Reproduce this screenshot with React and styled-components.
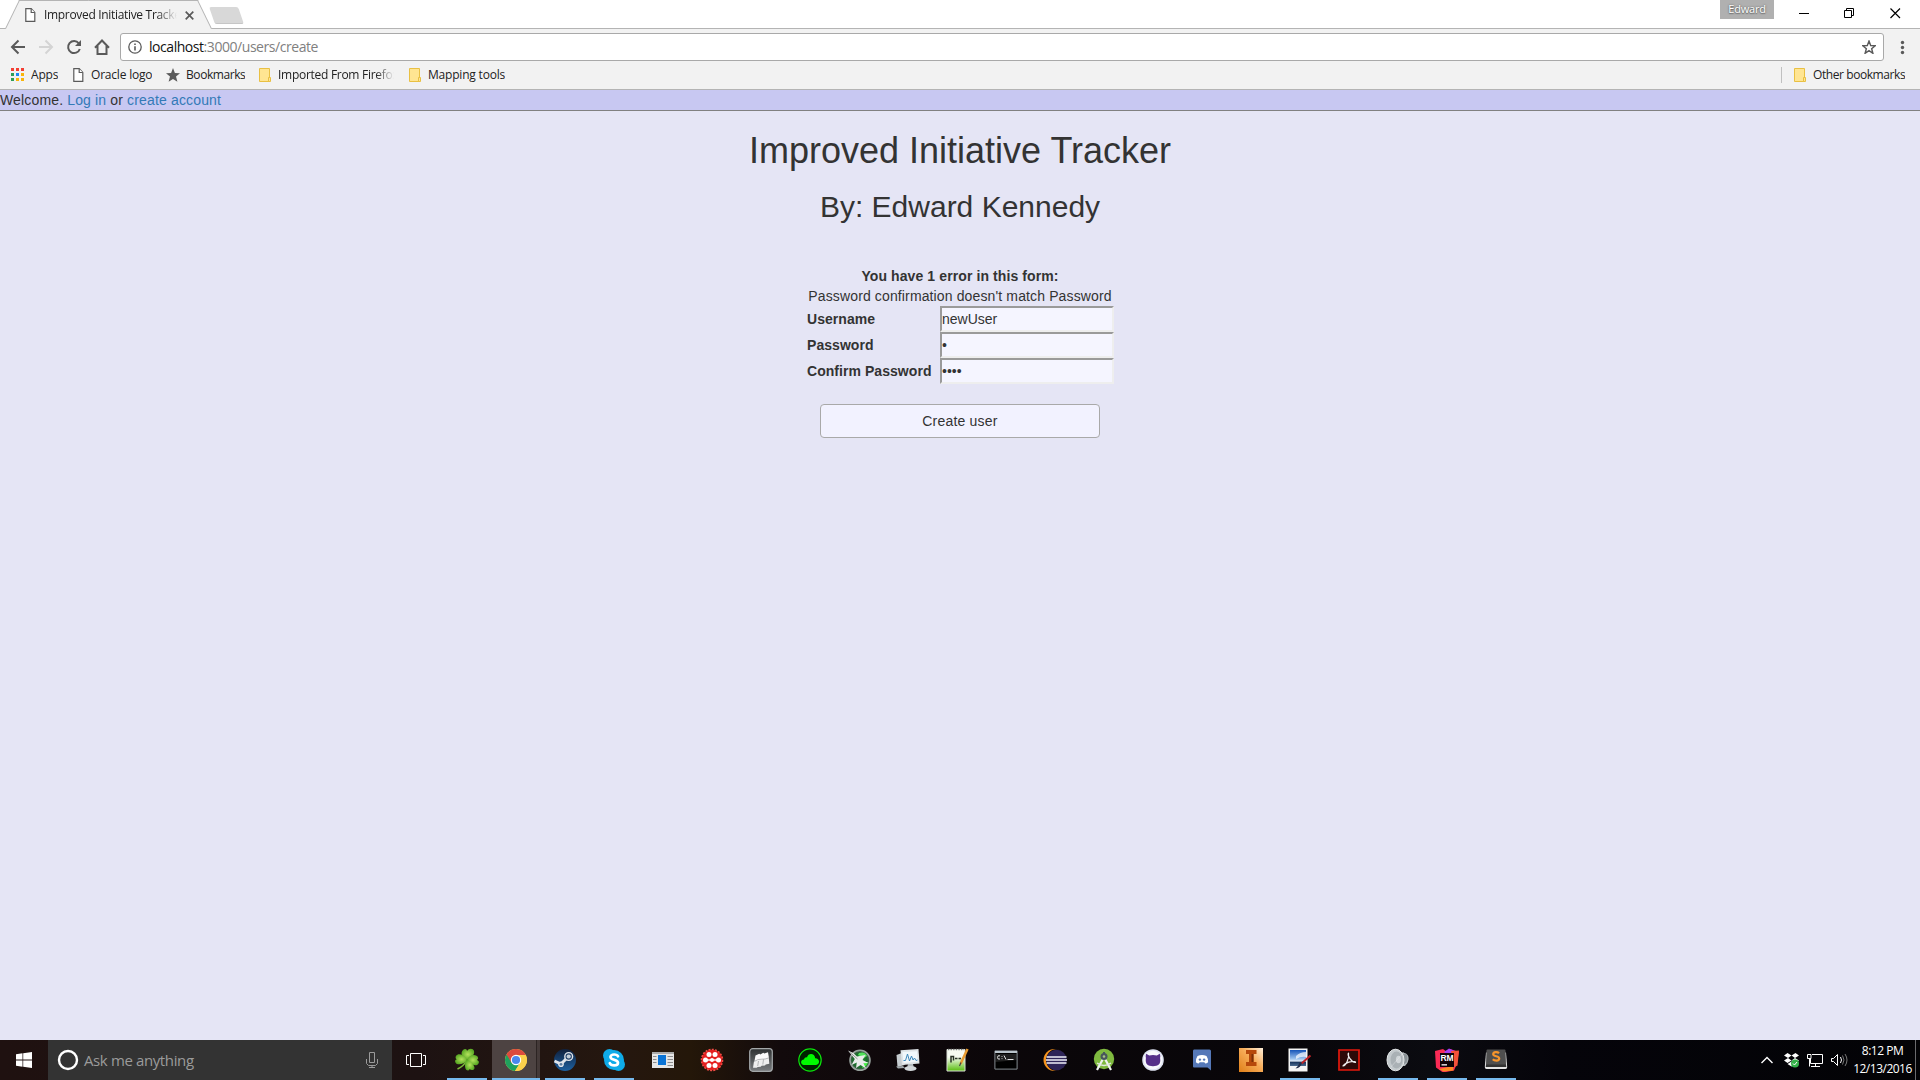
import React from "react";
import styled, { createGlobalStyle } from "styled-components";

const ui = `"Open Sans", "Noto Sans", sans-serif`;
const page = `"Liberation Sans", Arial, Helvetica, sans-serif`;

const Global = createGlobalStyle`
  *, *::before, *::after { box-sizing: border-box; }
  body { margin: 0; overflow: hidden; }
`;

const Screen = styled.div`
  width: 1920px;
  height: 1080px;
  display: flex;
  flex-direction: column;
  background: #e5e5f5;
  overflow: hidden;
`;

/* ---------- browser frame ---------- */
const TabStrip = styled.div`
  height: 29px;
  flex: none;
  display: flex;
  align-items: flex-start;
  background: #fff;
  box-shadow: inset 0 -1px 0 #b4b4b4;
`;

const Tab = styled.div`
  position: relative;
  width: 202px;
  height: 29px;
  margin-left: 7px;
  padding: 1px 0 0 18px;
  display: flex;
  align-items: center;
  &::before,
  &::after {
    content: "";
    position: absolute;
    top: 0;
    bottom: 0;
    background: #f2f2f2;
    border-top: 1px solid #b4b4b4;
  }
  &::before {
    left: 5px;
    width: 100px;
    transform: skewX(-26deg);
    border-left: 1px solid #b4b4b4;
  }
  &::after {
    right: 4px;
    width: 110px;
    transform: skewX(26deg);
    border-right: 1px solid #b4b4b4;
  }
  & > * {
    position: relative;
    z-index: 1;
  }
`;

const TabTitle = styled.span`
  width: 134px;
  margin-left: 8px;
  margin-right: 7px;
  overflow: hidden;
  white-space: nowrap;
  font: 12px/18px ${ui};
  letter-spacing: ${(p) => p.$track || 0}px;
  color: #222;
  mask-image: linear-gradient(90deg, #000 112px, transparent 133px);
`;

const NewTab = styled.div`
  width: 29px;
  height: 17px;
  margin: 7px 0 0 3px;
  background: #d8d8d8;
  border-bottom: 1px solid #c6c6c6;
  border-radius: 2px;
  transform: skewX(19deg);
`;

const WindowControls = styled.div`
  margin-left: auto;
  display: flex;
`;

const Profile = styled.div`
  width: 54px;
  height: 19px;
  background: #b0b0b0;
  color: #fff;
  text-align: center;
  font: 500 11px/18px ${ui};
  letter-spacing: -0.2px;
  text-shadow: 0 0 2px #555, 0 1px 1px #777;
`;

const ControlGlyphs = styled.svg`
  width: 146px;
  height: 28px;
  display: block;
`;

const Toolbar = styled.div`
  height: 32px;
  flex: none;
  display: flex;
  padding-top: 4px;
  background: #f2f2f2;
`;

const NavButtons = styled.svg`
  width: 120px;
  height: 28px;
  flex: none;
`;

const Omnibox = styled.div`
  flex: 1;
  height: 28px;
  display: flex;
  align-items: center;
  border: 1px solid #a9a9a9;
  border-radius: 3px;
  background: #fff;
  padding: 0 7px;
`;

const Url = styled.span`
  flex: 1;
  margin-left: 7px;
  font: 14px/20px ${ui};
  letter-spacing: -0.45px;
  color: #808080;
  b {
    font-weight: 400;
    color: #111;
  }
`;

const MenuDots = styled.svg`
  width: 36px;
  height: 28px;
  flex: none;
`;

const Bookmarks = styled.div`
  height: 29px;
  flex: none;
  display: flex;
  align-items: center;
  padding: 0 0 1px 11px;
  background: #f2f2f2;
  border-bottom: 1px solid #b4b4b4;
`;

const Bookmark = styled.div`
  display: flex;
  align-items: center;
  flex: none;
  width: ${(p) => p.$w}px;
  svg {
    flex: none;
    display: block;
  }
  span {
    margin-left: ${(p) => p.$gap || 7}px;
    white-space: nowrap;
    overflow: hidden;
    font: 12px/18px ${ui};
    letter-spacing: ${(p) => p.$track || 0}px;
    color: #222;
    ${(p) => p.$fade && "width: 118px; mask-image: linear-gradient(90deg, #000 98px, transparent 116px);"}
  }
`;

const OtherSide = styled.div`
  margin-left: auto;
  padding-left: 12px;
  height: 16px;
  display: flex;
  align-items: center;
  border-left: 1px solid #c0c0c0;
`;

/* ---------- page ---------- */
const UserBar = styled.div`
  height: 21px;
  flex: none;
  background: #c8c8f2;
  border-bottom: 1px solid #808080;
  font: 14px/20px ${page};
  letter-spacing: 0.15px;
  color: #333;
`;

const Link = styled.a`
  color: #337ab7;
`;

const Content = styled.main`
  flex: 1;
  display: flex;
  flex-direction: column;
  align-items: center;
  color: #333;
  font: 14px/20px ${page};
`;

const Title = styled.h1`
  margin: 20px 0 0;
  font: 400 36px/39.6px ${page};
`;

const Author = styled.h2`
  margin: 19px 0 0;
  font: 400 30px/33px ${page};
`;

const Errors = styled.div`
  margin-top: 43.4px;
  text-align: center;
`;

const ErrorLine = styled.div`
  height: 20px;
  font-weight: ${(p) => (p.$bold ? 700 : 400)};
  letter-spacing: ${(p) => (p.$bold ? 0.1 : 0.13)}px;
`;

const Fields = styled.form`
  width: 308px;
  display: grid;
  grid-template-columns: 134px 174px;
  grid-auto-rows: 26px;
`;

const Label = styled.label`
  padding-left: 1px;
  font-weight: 700;
  line-height: 26px;
  letter-spacing: 0.05px;
`;

const Field = styled.input`
  width: 174px;
  height: 26px;
  padding: 0;
  margin: 0;
  border: 2px solid;
  border-color: #9a9a9a #eeeeee #eeeeee #9a9a9a;
  background: #f5f5ff;
  color: #333;
  font: 14px/20px ${page};
  outline: none;
`;

const Submit = styled.button`
  width: 280px;
  height: 34px;
  margin-top: 20px;
  padding: 0;
  border: 1px solid #a9a9a9;
  border-radius: 4px;
  background: #f2f2ff;
  color: #333;
  font: 14px/20px ${page};
  letter-spacing: 0.2px;
`;

/* ---------- taskbar ---------- */
const Taskbar = styled.div`
  height: 40px;
  flex: none;
  display: flex;
  background: linear-gradient(90deg, #1f1110 0, #1d1212 420px, #25170f 620px, #241709 690px, #120a0c 780px, #0b0609 1000px, #08060a 1300px, #0b0b10 1430px, #05040a 1560px, #030306 1920px);
`;

const Start = styled.div`
  width: 48px;
  display: grid;
  place-items: center;
`;

const Search = styled.div`
  width: 344px;
  display: flex;
  align-items: center;
  background: #333;
  padding: 0 14px 0 9px;
  span {
    flex: 1;
    margin-left: 5px;
    font: 15px/20px ${ui};
    letter-spacing: -0.38px;
    color: #9b9b9b;
  }
`;

const Slot = styled.div`
  width: ${(p) => p.$w || 49}px;
  height: 40px;
  display: grid;
  place-items: center;
  background: ${(p) => (p.$active ? "linear-gradient(90deg, transparent 1px, #4d4342 1px, #4d4342 45px, #2c2423 45px, #2c2423 46px, #443a39 46px)" : "none")};
  position: relative;
  &::after {
    content: "";
    display: ${(p) => (p.$open || p.$active ? "block" : "none")};
    position: absolute;
    bottom: 0;
    height: 2px;
    left: ${(p) => (p.$active ? 1 : 5)}px;
    width: ${(p) => (p.$active ? 48 : 40)}px;
    background: #76b9ed;
  }
  svg {
    display: block;
  }
`;

const Tray = styled.svg`
  margin-left: auto;
  width: 100px;
  height: 40px;
  display: block;
`;

const Clock = styled.div`
  width: 66px;
  padding: 2px 0 2px 1px;
  text-align: center;
  color: #fff;
  font: 12px/18px ${ui};
  letter-spacing: -0.5px;
  white-space: nowrap;
`;

const ShowDesktop = styled.div`
  width: 5px;
  border-left: 1px solid #6a6a6d;
`;

/* ---------- small icons ---------- */
const FileIcon = () => (
  <svg width="11" height="14" viewBox="0 0 11 14" fill="#fff" stroke="#5a5a5a" strokeWidth="1.2">
    <path d="M.8.7h5.4l3.6 3.8v8.8h-9z" />
    <path d="M6.2.7v3.8h3.6" />
  </svg>
);

const FolderIcon = () => (
  <svg width="12" height="14" viewBox="0 0 12 14">
    <path d="M.5.5h10v13H.5z" fill="#ffe592" stroke="#e9c043" />
    <path d="M9.5 9.5h2v4h-2z" fill="#ffe592" stroke="#e9c043" />
  </svg>
);

const AppsIcon = () => {
  const colors = ["#f33e33", "#f33e33", "#f33e33", "#2f9e58", "#1e88f5", "#f9b50b", "#2f9e58", "#f9b50b", "#f9b50b"];
  return (
    <svg width="13" height="13">
      {colors.map((c, i) => (
        <rect key={i} x={(i % 3) * 5} y={Math.floor(i / 3) * 5} width="3" height="3" fill={c} />
      ))}
    </svg>
  );
};

const STAR = "M7 0l1.900 5 5.100.3-4 3.300 1.400 5.200L7 10.900l-4.400 2.900L4 8.600 0 5.300l5.100-.3z";

const Icon = ({ children }) => (
  <svg width="24" height="24" viewBox="0 0 24 24">
    {children}
  </svg>
);

/* ---------- taskbar programs ---------- */
const Clover = () => (
  <Icon>
    <defs>
      <radialGradient id="leaf">
        <stop offset="0" stopColor="#b4e25c" />
        <stop offset="1" stopColor="#5dab26" />
      </radialGradient>
    </defs>
    <path d="M12 12Q9 18 2.500 21" stroke="#7cb83a" strokeWidth="1.600" fill="none" />
    <g fill="url(#leaf)">
      <path d="M12 12C7 9 5 5 8 2c2-2 4-1 4 1 2-3 6-3 7 0 1 4-3 7-7 9z" />
      <path d="M12 12C9 6 3 5 1 8c-1 2 0 3 1 3-3 1-2 4 0 5 4 1 8-1 11-4z" />
      <path d="M12 12c2-5 7-6 10-4 2 2 1 3 0 4 3 1 2 4 0 5-4 1-8-2-10-5z" />
      <path d="M11.500 11.500c-2 4-2 9 0 10.500 2 1 3 0 3-1 2 2 5 1 5-1 0-3-4-7-8-8.500z" />
    </g>
  </Icon>
);

const Chrome = () => (
  <Icon>
    <circle cx="12" cy="12" r="11" fill="#fbd04b" />
    <path d="M2.500 6.500A11 11 0 0 0 11 23l5.200-8.600L12 12z" fill="#1fa15d" />
    <path d="M2.500 6.500L7.600 15l4-3L12 7h9.700A11 11 0 0 0 2.500 6.500z" fill="#dc4a3e" />
    <path d="M21.700 7H12l4.400 7.500L11 23A11 11 0 0 0 21.700 7z" fill="#fbd04b" />
    <circle cx="12" cy="12" r="5.200" fill="#fff" />
    <circle cx="12" cy="12" r="4.100" fill="#4a87ee" />
  </Icon>
);

const Steam = () => (
  <Icon>
    <defs>
      <linearGradient id="steam" x2="0" y2="1">
        <stop offset="0" stopColor="#10203c" />
        <stop offset="1" stopColor="#1d60a0" />
      </linearGradient>
    </defs>
    <circle cx="12" cy="12" r="11" fill="url(#steam)" />
    <path d="M1.500 13l6.500 3L14.500 9.500" stroke="#dfe4ea" strokeWidth="3" fill="none" />
    <circle cx="8" cy="16.300" r="2.800" fill="#dfe4ea" />
    <circle cx="8" cy="16.300" r="1.400" fill="#5c7ca0" />
    <circle cx="15.700" cy="8.500" r="3.900" fill="#24436b" stroke="#dfe4ea" strokeWidth="1.400" />
    <circle cx="15.700" cy="8.500" r="2.100" fill="#c3ced9" />
  </Icon>
);

const Skype = () => (
  <Icon>
    <g fill="#0fabe8">
      <circle cx="12" cy="12" r="10" />
      <circle cx="7.500" cy="7.500" r="6.500" />
      <circle cx="16.500" cy="16.500" r="6.500" />
    </g>
    <path d="M16 8.300C15 6 9 5.600 8.500 8.800c-.4 3.500 7.500 2.500 7.500 6 0 3.500-7 3.200-8.200.4" stroke="#fff" strokeWidth="2.700" strokeLinecap="round" fill="none" />
  </Icon>
);

const NewsWindow = () => (
  <Icon>
    <path d="M1 4h22v16H1z" fill="#e6e6e6" />
    <path d="M1 4h22v2H1z" fill="#aaa" />
    <path d="M7 7h8v10H7z" fill="#0a74d6" />
    <path d="M2 8.500h3.500M2 11.500h3.500M2 14.500h3.500M16.500 8.500H22M16.500 11.500H22M16.500 14.500H22M16.500 17.500H22" stroke="#8c8c8c" />
  </Icon>
);

const RedBadge = () => (
  <Icon>
    <circle cx="12" cy="12" r="10.300" fill="#e51f1f" stroke="#f04d45" strokeWidth="2" strokeDasharray="2 1.200" />
    <circle cx="12" cy="12" r="10" fill="#e51f1f" />
    <g fill="#fff">
      <circle cx="9" cy="6.500" r="2.500" />
      <circle cx="15" cy="6.500" r="2.500" />
      <circle cx="5.500" cy="12" r="2.500" />
      <circle cx="18.500" cy="12" r="2.500" />
      <circle cx="9" cy="17.500" r="2.500" />
      <circle cx="15" cy="17.500" r="2.500" />
      <circle cx="12" cy="12" r="2" />
      <path d="M5 11.300h14v1.400H5z" />
    </g>
  </Icon>
);

const Flags = () => (
  <Icon>
    <defs>
      <linearGradient id="flags" x2="0" y2="1">
        <stop offset="0" stopColor="#2e3132" />
        <stop offset="1" stopColor="#7a7d7f" />
      </linearGradient>
    </defs>
    <rect x=".7" y=".7" width="22.600" height="22.600" rx="3" fill="url(#flags)" stroke="#a4a8aa" strokeWidth="1.200" />
    <path d="M6.500 7.500l3.800-1.800 1 .8 3-1.800 1 .8L19 4.200l1 6-3.500 1-3.500 1-4 1.300-3.800 1z" fill="#fafafa" />
    <path d="M5 13.300l14.800-3.500.5 6-3.600.8-.7.900-3.400.3-.9 1-3 .2-1 .8H4z" fill="#efefef" />
    <path d="M5 13.500q4-2.600 7.500-2.300T20 9.800M9.500 13l-.8 5M14.500 11.500l-.7 5" stroke="#777b7d" strokeWidth=".5" fill="none" />
  </Icon>
);

const Cloud = () => (
  <Icon>
    <circle cx="12" cy="12" r="11.200" fill="#020" stroke="#0be50b" strokeWidth="1.200" />
    <path d="M5.500 17C2 16 2.500 11.500 6 11.500c.500-2 2-2.500 3-2 1-5 8-4.500 8.200.8 5 .3 5 6.200.800 6.700z" fill="#00fb00" />
  </Icon>
);

const Afterburner = () => (
  <Icon>
    <defs>
      <radialGradient id="orb">
        <stop offset="0" stopColor="#2b9a3c" />
        <stop offset=".7" stopColor="#186a28" />
        <stop offset="1" stopColor="#53605a" />
      </radialGradient>
    </defs>
    <circle cx="13" cy="12.300" r="10" fill="url(#orb)" stroke="#98a29d" strokeWidth="1.600" />
    <path d="M12 5q6-2 8 3l-3 2-6-3z" fill="#52e35c" />
    <path d="M15 20q5-1 6-6l-4 1z" fill="#3ff23f" />
    <path d="M1 2.500Q6 4 10 8.500L18.500 7 15.500 12l6 3-5 .2 2.500 5.300-5.500-3.500L9 20l.8-5.500L4.500 17l3.300-6z" fill="#e9ecea" />
    <path d="M2.500 4l8 7" stroke="#7d8581" strokeWidth=".8" />
  </Icon>
);

const Monitors = () => (
  <Icon>
    <path d="M.5 7l8-3v13l-7 2z" fill="#c6ccd0" />
    <path d="M4.500 2.300L22.500 1l1 14.500L6 17z" fill="#dfe4e7" />
    <path d="M6.500 4l14.500-.8.700 10.500L7.500 15z" fill="#f1f8fc" />
    <path d="M7.500 12.500h2L11.500 6l2 7 2-5 1.500 4 1.500-2 1.500 2.500 1.500-.5" stroke="#3d87bb" fill="none" />
    <path d="M12 16h5l1 4h-7z" fill="#b4bbbf" />
    <ellipse cx="14.500" cy="20.500" rx="6" ry="2.500" fill="#d2d7da" />
    <path d="M0 18.500l7-.5 2 2-7 .500z" fill="#a3aaae" />
  </Icon>
);

const Notepad = () => (
  <Icon>
    <defs>
      <linearGradient id="pad" x2="0" y2="1">
        <stop offset=".35" stopColor="#f6faf1" />
        <stop offset="1" stopColor="#58bd0d" />
      </linearGradient>
    </defs>
    <path d="M2 1.500h18v21.500H2z" fill="url(#pad)" stroke="#d8ddd4" />
    <path d="M3 1.500h16" stroke="#777" strokeWidth="1.500" strokeDasharray="1.300 1.300" />
    <path d="M6 14.500V8.500h2.500v4M10 10.500h2.500M13.500 10.500H16" stroke="#283026" strokeWidth="1.500" fill="none" />
    <path d="M22.500 1L15.500 16" stroke="#e89b31" strokeWidth="2.500" />
    <path d="M16 14.500l-1.500 3.500" stroke="#444" strokeWidth="1.200" />
  </Icon>
);

const Terminal = () => (
  <Icon>
    <path d="M.9 2.900h22.200v18.200H.9z" fill="#000" stroke="#848b90" />
    <path d="M1 3h22v2H1z" fill="#bac4cb" />
    <path d="M6 7.800q-2.500-.8-2.500 1.600T6 11M8 8v.8M8 10.300v.8M10 7.500l2 4M13.500 11.500h6" stroke="#dedede" fill="none" />
    <path d="M1.500 6h21v6l-21 2z" fill="#fff" opacity=".12" />
  </Icon>
);

const Eclipse = () => (
  <Icon>
    <circle cx="11.500" cy="12" r="11" fill="#f7941e" />
    <circle cx="14" cy="12" r="11" fill="#0b0609" />
    <circle cx="13.500" cy="12" r="10.300" fill="#2e2457" />
    <path d="M3.500 9h20M3 12h21M3.500 15h20" stroke="#f0eef8" strokeWidth="1.600" />
  </Icon>
);

const AndroidStudio = () => (
  <Icon>
    <circle cx="12" cy="11" r="10.200" fill="#7fb93f" />
    <path d="M12 9L5 22M12 9l7 13" stroke="#eef2ee" strokeWidth="2.200" />
    <path d="M5 15q7 5 14 0" stroke="#e2e8df" strokeWidth="1.300" fill="none" />
    <circle cx="12" cy="8.500" r="3.500" fill="#48565c" />
    <path d="M11 4h2v4h-2z" fill="#48565c" />
    <circle cx="12" cy="8.500" r="1.300" fill="#a7c386" />
  </Icon>
);

const GitHub = () => (
  <Icon>
    <circle cx="12" cy="12" r="10.800" fill="#dfe3f2" />
    <circle cx="12" cy="12" r="9.300" fill="#f8f9fd" />
    <path d="M5.200 5.800l3 1.600q3.800-1 7.600 0l3-1.600q1 2.500.3 4.200c1 6.500-2 8.200-7.100 8.200S4 16.500 4.900 10q-.7-1.700.3-4.200z" fill="#56308a" />
  </Icon>
);

const Discord = () => (
  <Icon>
    <path d="M4 1.500h15.500q1.500 0 1.500 1.500v19.500l-3.500-3H4q-1 0-1-1V3q0-1.500 1-1.500z" fill="#5578b8" />
    <path d="M7.500 8q4.500-2 9 0 2 3 1.600 6.300-1.500 1.200-2.800 1.300l-1-1.400H9.700l-1 1.400q-1.300-.1-2.800-1.300Q5.500 11 7.500 8z" fill="#fff" />
    <circle cx="9.900" cy="11.600" r="1.200" fill="#5578b8" />
    <circle cx="14.100" cy="11.600" r="1.200" fill="#5578b8" />
  </Icon>
);

const Inventor = () => (
  <Icon>
    <defs>
      <linearGradient id="inv" x1="0" y1="1" x2="1" y2="0">
        <stop offset="0" stopColor="#e07f18" />
        <stop offset=".55" stopColor="#f7ab57" />
        <stop offset="1" stopColor="#fff0dc" />
      </linearGradient>
    </defs>
    <path d="M0 0h24v24H0z" fill="url(#inv)" />
    <path d="M7 2h10.500v4H14.500v8h3v4H7v-4h3V6H7z" fill="#b6480b" />
    <path d="M12.500 6h2v8h-2z" fill="#7d2f07" />
  </Icon>
);

const Paint = () => (
  <Icon>
    <defs>
      <linearGradient id="sky" x2="0" y2="1">
        <stop offset="0" stopColor="#1554b8" />
        <stop offset=".55" stopColor="#9cc3ee" />
        <stop offset=".7" stopColor="#e4edf5" />
        <stop offset=".75" stopColor="#17325a" />
        <stop offset="1" stopColor="#4d6c90" />
      </linearGradient>
    </defs>
    <path d="M.5.5h19v23H.5z" fill="#f5f5f5" />
    <path d="M2 2h16v16H2z" fill="url(#sky)" />
    <path d="M8 8q4-4 10-4v5q-5-1-10 2z" fill="#fff" opacity=".7" />
    <path d="M22.500 7.500L13.500 15.500" stroke="#bd2226" strokeWidth="2" />
    <path d="M13.800 14.800Q13 20 7.500 20.500q3-2.500 4-5.700z" fill="#222e4a" />
  </Icon>
);

const Acrobat = () => (
  <Icon>
    <path d="M2 2h20v20H2z" fill="#2c0a08" stroke="#e3180c" strokeWidth="1.700" />
    <path d="M11.500 5c-1.500 2 2.500 9 7 9.500 1-1.500-8-2-12.500 3.500 3-.5 6.500-8 5.500-13z" stroke="#eee" strokeWidth="1.200" fill="none" strokeLinejoin="round" />
  </Icon>
);

const Speaker = () => (
  <Icon>
    <path d="M9 1l6 3 5 1.500q3 2 2.500 6t-3.500 6.500l-4 0-4 5z" fill="#b1b8bb" />
    <path d="M16 5.500l4.500.8q2 3 0 8.500L16 17z" fill="#8a9296" />
    <ellipse cx="9.500" cy="12" rx="8.500" ry="10.800" fill="#c3c9cc" stroke="#e3e6e7" strokeWidth="1" />
    <ellipse cx="10.500" cy="12" rx="6" ry="8.500" fill="#aab1b5" />
    <ellipse cx="12.500" cy="11.500" rx="2.600" ry="3.800" fill="#d0d5d8" />
    <path d="M5 19L18 4" stroke="#eef0f1" strokeWidth=".6" opacity=".6" />
  </Icon>
);

const LogoText = styled.text`
  font: 700 ${(p) => p.$size}px ${page};
  text-anchor: middle;
`;

const RubyMine = () => (
  <Icon>
    <path d="M0 3l8-2 4 3 3-3 6 2 3 .5-2 12-3 7-11 2-7-5z" fill="#fa2a55" />
    <path d="M9 4l5-3.500L20 3l-6 6z" fill="#a63ef0" />
    <path d="M16 3l8-.5-1.500 15-4 2z" fill="#f4513a" />
    <path d="M4 21l14-3 .5 4.500-10 1z" fill="#fc8a24" />
    <path d="M5 5h14v14H5z" fill="#100408" />
    <LogoText x="12" y="13" $size={8.500} fill="#fff">RM</LogoText>
    <path d="M6.500 16.200h5.500v1.300H6.500z" fill="#fff" />
  </Icon>
);

const Sublime = () => (
  <Icon>
    <path d="M2 4.500L.8 19q0 2 1.700 2h19q1.700 0 1.700-2L22 4.500z" fill="#e4e4e4" />
    <path d="M2.500 2.500q0-1 1-1h17q1 0 1 1L22 16.500q0 1.500-1 1.500H3q-1 0-1-1.500z" fill="#4f4f4f" />
    <path d="M2 16.500h20l.3 2.500H1.700z" fill="#333" />
    <path d="M15 5.300q-1.200-1.300-3.300-1.100-2.500.3-2.500 2 0 1.300 3 2t3 2.300q0 2-2.700 2.200-2.500 0-3.700-1.400" stroke="#f8952b" strokeWidth="2.200" fill="none" />
  </Icon>
);

const programs = [
  [Clover, "open"], [Chrome, "active"], [Steam, "open"], [Skype, "open"], [NewsWindow], [RedBadge], [Flags], [Cloud],
  [Afterburner], [Monitors], [Notepad], [Terminal], [Eclipse], [AndroidStudio], [GitHub], [Discord], [Inventor],
  [Paint, "open"], [Acrobat], [Speaker, "open"], [RubyMine, "open"], [Sublime, "open"],
];

export default function App() {
  return (
    <Screen>
      <Global />
      <TabStrip>
        <Tab>
          <FileIcon />
          <TabTitle $track={-0.32}>Improved Initiative Tracker</TabTitle>
          <svg width="9" height="9" viewBox="0 0 9 9" stroke="#5a5a5a" strokeWidth="1.700">
            <path d="M.7.700l7.600 7.600M8.300.7L.7 8.300" />
          </svg>
        </Tab>
        <NewTab />
        <WindowControls>
          <Profile>Edward</Profile>
          <ControlGlyphs stroke="#000" fill="none">
            <path d="M25 13.500h10" />
            <path d="M70.500 10.500h7v7h-7zM72.500 10V8.500h7v7H78" />
            <path d="M116.500 8.500l9.500 9.500M126 8.500L116.500 18" strokeWidth="1.200" />
          </ControlGlyphs>
        </WindowControls>
      </TabStrip>
      <Toolbar>
        <NavButtons fill="none" stroke="#5a5a5a" strokeWidth="2">
          <path d="M25 14H12.500M18.500 7.500L12 14l6.500 6.500" />
          <path d="M39 14h12.500M45.500 7.500L52 14l-6.500 6.500" stroke="#d4d4d4" />
          <path d="M78.800 10.300A6 6 0 1 0 79.800 16" />
          <path d="M81 7v6h-6z" fill="#5a5a5a" stroke="none" />
          <path d="M95 14.700L102 7.500l7 7.200M97.500 13v8h9v-8" />
        </NavButtons>
        <Omnibox>
          <svg width="14" height="14" viewBox="0 0 14 14" fill="none" stroke="#5a5a5a">
            <circle cx="7" cy="7" r="6.200" strokeWidth="1.300" />
            <path d="M7 6.200v4.300M7 3.400v1.600" strokeWidth="1.600" />
          </svg>
          <Url>
            <b>localhost</b>:3000/users/create
          </Url>
          <svg width="14" height="14" viewBox="-0.900 -1.200 15.800 15.800" fill="none" stroke="#5a5a5a" strokeWidth="1.600">
            <path d={STAR} />
          </svg>
        </Omnibox>
        <MenuDots fill="#5a5a5a">
          <circle cx="18.500" cy="9.500" r="1.700" />
          <circle cx="18.500" cy="14.500" r="1.700" />
          <circle cx="18.500" cy="19.500" r="1.700" />
        </MenuDots>
      </Toolbar>
      <Bookmarks>
        <Bookmark $w={62} $track={-0.2}><AppsIcon /><span>Apps</span></Bookmark>
        <Bookmark $w={93} $track={-0.2}><FileIcon /><span>Oracle logo</span></Bookmark>
        <Bookmark $w={93} $gap={6} $track={-0.42}>
          <svg width="14" height="14" viewBox="0 0 14 14"><path d={STAR} fill="#5a5a5a" /></svg>
          <span>Bookmarks</span>
        </Bookmark>
        <Bookmark $w={150} $track={-0.28} $fade><FolderIcon /><span>Imported From Firefox</span></Bookmark>
        <Bookmark $w={120} $track={-0.2}><FolderIcon /><span>Mapping tools</span></Bookmark>
        <OtherSide>
          <Bookmark $w={126} $track={-0.42}><FolderIcon /><span>Other bookmarks</span></Bookmark>
        </OtherSide>
      </Bookmarks>
      <UserBar>
        Welcome. <Link>Log in</Link> or <Link>create account</Link>
      </UserBar>
      <Content>
        <Title>Improved Initiative Tracker</Title>
        <Author>By: Edward Kennedy</Author>
        <Errors>
          <ErrorLine $bold>You have 1 error in this form:</ErrorLine>
          <ErrorLine>Password confirmation doesn't match Password</ErrorLine>
        </Errors>
        <Fields>
          <Label>Username</Label>
          <Field type="text" defaultValue="newUser" />
          <Label>Password</Label>
          <Field type="password" defaultValue="1" />
          <Label>Confirm Password</Label>
          <Field type="password" defaultValue="1234" />
        </Fields>
        <Submit type="button">Create user</Submit>
      </Content>
      <Taskbar>
        <Start>
          <svg width="16" height="16" viewBox="0 0 16 16" fill="#fff">
            <path d="M0 2.200l6.500-.9v6.300H0zM7.200 1.200L16 0v7.600H7.200zM0 8.400h6.500v6.300L0 13.800zM7.200 8.400H16V16l-8.800-1.200z" />
          </svg>
        </Start>
        <Search>
          <svg width="22" height="22"><circle cx="11" cy="11" r="9" fill="none" stroke="#fff" strokeWidth="2.400" /></svg>
          <span>Ask me anything</span>
          <svg width="12" height="16" viewBox="0 0 12 16" fill="none" stroke="#9b9b9b">
            <path d="M3.500.5h5v10h-5zM.5 7v4.500l2 2h7l2-2V7M6 13.500v2M3 15.500h6" />
          </svg>
        </Search>
        <Slot $w={50}>
          <svg width="22" height="14" fill="none" stroke="#fff">
            <path d="M4.500.5h11v13h-11zM3 2.500H.5v9H3M17 2.500h2.500v9H17" />
          </svg>
        </Slot>
        {programs.map(([Art, state], i) => (
          <Slot key={i} $open={state === "open"} $active={state === "active"}>
            <Art />
          </Slot>
        ))}
        <Tray fill="none" stroke="#fff">
          <path d="M12.500 23l5.500-5.500 5.500 5.500" strokeWidth="1.400" />
          <g fill="#fff" stroke="none">
            <path d="M38.500 13l4 2.500-3.500 2.500-4-2.500zM46.500 13l3.500 2.500-4 2.500-3.500-2.500zM39 18l3.500 2.500-4 2.500-3.500-2.500zM46 18l4 2.500-3.500 2.500-4-2.500zM38.500 24l4-2.500 4 2.500-4 2.500z" />
          </g>
          <circle cx="46" cy="23.500" r="4" fill="#35b24a" stroke="none" />
          <path d="M44 23.500l1.500 1.500 2.500-3" />
          <path d="M63 14.500h10.500v9H61.500V19M66.500 24v3M62 26.500h9M58.500 14.500h3.500v4h-3.500zM60.500 18.500v8" />
          <path d="M82.500 18.500h2l4-4v11l-4-4h-2z" />
          <path d="M91.500 17q2 3 0 6" />
          <path d="M93.500 15.500q3 4.500 0 9M96 14q4 6 0 12" stroke="#777" />
        </Tray>
        <Clock>
          8:12 PM
          <br />
          12/13/2016
        </Clock>
        <ShowDesktop />
      </Taskbar>
    </Screen>
  );
}
